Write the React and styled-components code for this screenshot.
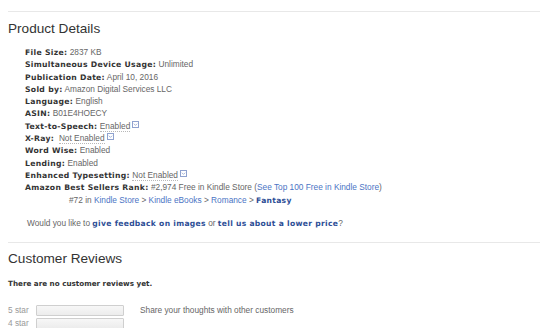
import React from 'react'
import styled, { createGlobalStyle } from 'styled-components'

const GlobalStyle = createGlobalStyle`
  body {
    margin: 0;
    background: #fff;
    font-family: "Liberation Sans", Arial, sans-serif;
  }
`

// Page wrapper
const Page = styled.div`
  padding: 11px 0 0 8px;
  width: 532px;
`

// Thin gray rule between sections
const Divider = styled.div`
  height: 1px;
  background: #e8e8e8;
`

// Section heading
const SectionTitle = styled.h2`
  margin: 0;
  font-weight: normal;
  font-size: 13.6px;
  line-height: 16px;
  color: #333;
  padding: ${p => p.$pad || '9px 0 9px'};
`

// Details list
const DetailList = styled.ul`
  list-style: none;
  margin: 0;
  padding: 0 0 0 17px;
`

const Item = styled.li`
  height: 12.3px;
  line-height: 12.3px;
  white-space: nowrap;
  font-size: 8.3px;
  color: #666;
  padding-left: ${p => p.$indent || 0}px;
`

const Label = styled.b`
  font-family: "DejaVu Sans", Verdana, sans-serif;
  font-weight: bold;
  font-size: 7.7px;
  letter-spacing: 0.3px;
  color: #333;
`

const Dotted = styled.span`
  border-bottom: 1px dotted #b8b8b8;
`

const Link = styled.a`
  color: #4a74c4;
  text-decoration: none;
`

const BoldLink = styled.a`
  font-family: "DejaVu Sans", Verdana, sans-serif;
  font-weight: bold;
  font-size: 7.6px;
  letter-spacing: 0.3px;
  color: #2d4e96;
  text-decoration: none;
`

const Feedback = styled.p`
  margin: 0;
  padding: 11px 0 12px 19px;
  font-size: 8.3px;
  line-height: 12px;
  color: #666;
`

const NoReviews = styled.p`
  margin: 2px 0 15px;
  font-family: "DejaVu Sans", Verdana, sans-serif;
  font-weight: bold;
  font-size: 7.2px;
  line-height: 12px;
  color: #333;
`

const Histogram = styled.div`
  display: grid;
  grid-template-columns: 28px 88px 1fr;
  row-gap: 2px;
  align-items: center;
`

const StarLabel = styled.span`
  font-size: 8.3px;
  color: #999;
  line-height: 11px;
`

const Bar = styled.div`
  height: 9px;
  border: 1px solid #cfcfcf;
  background: linear-gradient(#f7f7f7, #ececec);
  border-radius: 1px;
`

const Share = styled.span`
  padding-left: 16px;
  font-size: 8.3px;
  color: #666;
`

const Popover = () => (
  <svg width="7" height="7" viewBox="0 0 7 7" style={{ marginLeft: 2, verticalAlign: 1 }}>
    <rect x="0.5" y="0.5" width="6" height="6" fill="#fff" stroke="#8fa2cf" />
    <path d="M1.8 2.7 L3.5 4.4 L5.2 2.7" fill="none" stroke="#8fa2cf" strokeWidth="0.8" />
  </svg>
)

function App() {
  return (
    <Page>
      <GlobalStyle />
      <Divider />
      <SectionTitle>Product Details</SectionTitle>
      <DetailList>
        <Item><Label>File Size:</Label> 2837 KB</Item>
        <Item><Label>Simultaneous Device Usage:</Label> Unlimited</Item>
        <Item><Label>Publication Date:</Label> April 10, 2016</Item>
        <Item><Label>Sold by:</Label> Amazon Digital Services LLC</Item>
        <Item><Label>Language:</Label> English</Item>
        <Item><Label>ASIN:</Label> B01E4HOECY</Item>
        <Item><Label>Text-to-Speech:</Label> <Dotted>Enabled</Dotted><Popover /></Item>
        <Item><Label>X-Ray:</Label>&nbsp; <Dotted>Not Enabled</Dotted><Popover /></Item>
        <Item><Label>Word Wise:</Label> Enabled</Item>
        <Item><Label>Lending:</Label> Enabled</Item>
        <Item><Label>Enhanced Typesetting:</Label> <Dotted>Not Enabled</Dotted><Popover /></Item>
        <Item>
          <Label>Amazon Best Sellers Rank:</Label> #2,974 Free in Kindle Store (<Link>See Top 100 Free in Kindle Store</Link>)
        </Item>
        <Item $indent={44}>
          #72 in <Link>Kindle Store</Link> &gt; <Link>Kindle eBooks</Link> &gt; <Link>Romance</Link> &gt; <BoldLink>Fantasy</BoldLink>
        </Item>
      </DetailList>
      <Feedback>
        Would you like to <BoldLink>give feedback on images</BoldLink> or <BoldLink>tell us about a lower price</BoldLink>?
      </Feedback>
      <Divider />
      <SectionTitle $pad="8px 0 9px">Customer Reviews</SectionTitle>
      <NoReviews>There are no customer reviews yet.</NoReviews>
      <Histogram>
        <StarLabel>5 star</StarLabel>
        <Bar />
        <Share>Share your thoughts with other customers</Share>
        <StarLabel>4 star</StarLabel>
        <Bar />
        <span />
      </Histogram>
    </Page>
  )
}

export default App
